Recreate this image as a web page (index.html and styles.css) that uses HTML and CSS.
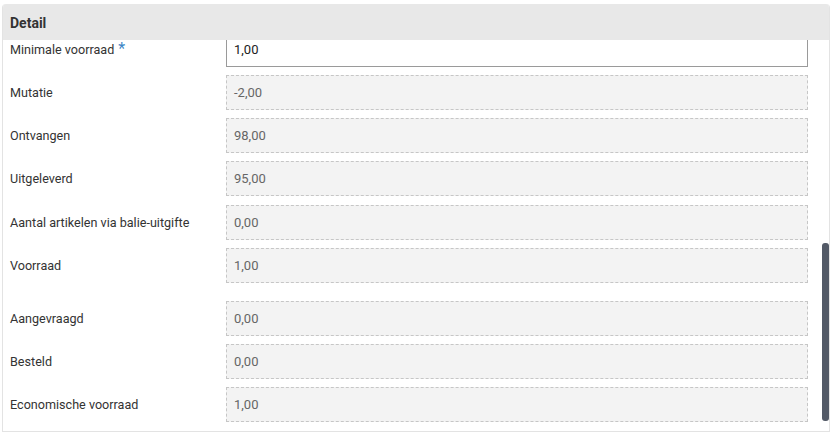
FILE: index.html
```html
<!DOCTYPE html>
<html>
<head>
<meta charset="utf-8">
<link rel="stylesheet" href="styles.css">
</head>
<body>
<div class="panel">
  <div class="panel-header">Detail</div>
  <div class="panel-body">
    <div class="scroll-area">
      <div class="form">
        <div class="row"><label class="label">Minimale voorraad<span class="req">*</span></label><div class="input editable">1,00</div></div>
        <div class="row"><label class="label">Mutatie</label><div class="input disabled">-2,00</div></div>
        <div class="row"><label class="label">Ontvangen</label><div class="input disabled">98,00</div></div>
        <div class="row row-nudge"><label class="label">Uitgeleverd</label><div class="input disabled">95,00</div></div>
        <div class="row"><label class="label">Aantal artikelen via balie-uitgifte</label><div class="input disabled">0,00</div></div>
        <div class="row row-spaced"><label class="label">Voorraad</label><div class="input disabled">1,00</div></div>
        <div class="row"><label class="label">Aangevraagd</label><div class="input disabled">0,00</div></div>
        <div class="row"><label class="label">Besteld</label><div class="input disabled">0,00</div></div>
        <div class="row"><label class="label">Economische voorraad</label><div class="input disabled">1,00</div></div>
      </div>
    </div>
    <div class="scroll-track"><div class="scroll-thumb"></div></div>
  </div>
</div>
</body>
</html>
```
FILE: styles.css
```css
* { box-sizing: border-box; }
html, body {
  margin: 0;
  padding: 0;
  background: #ffffff;
  font-family: Roboto, "Liberation Sans", sans-serif;
  color: #333333;
}
.panel {
  margin: 4px 5px 0 2px;
  height: 428px;
  border: 1px solid #e3e3e3;
  border-top: none;
  border-radius: 4px 4px 0 0;
  display: flex;
  flex-direction: column;
  overflow: hidden;
}
.panel-header {
  height: 36px;
  flex: none;
  background: #e8e8e8;
  padding-left: 7px;
  padding-top: 1px;
  display: flex;
  align-items: center;
  font-size: 14px;
  font-weight: 700;
  color: #333333;
}
.panel-body {
  flex: 1;
  display: flex;
  min-height: 0;
}
.scroll-area {
  flex: 1;
  overflow: hidden;
  padding-right: 13px;
}
.form {
  margin-top: -8px;
  padding-left: 7px;
  display: flex;
  flex-direction: column;
  gap: 8px;
}
.row {
  display: grid;
  grid-template-columns: 216px 1fr;
  align-items: center;
  height: 35px;
}
.row-nudge { margin-bottom: 1px; }
.row-spaced { margin-bottom: 10px; }
.label {
  font-size: 12.6px;
  color: #333333;
  white-space: nowrap;
  line-height: 18px;
}
.req {
  color: #3d86c6;
  font-size: 16px;
  line-height: 16px;
  margin-left: 4px;
  position: relative;
  top: 0px;
}
.input {
  height: 35px;
  display: flex;
  align-items: center;
  padding-left: 7px;
  font-size: 13px;
}
.editable {
  background: #ffffff;
  border: 1px solid #9a9a9a;
  border-top-color: #b5b5b5;
  color: #222222;
}
.disabled {
  background: #f3f3f3;
  border: 1px dashed #c6c6c6;
  color: #666666;
}
.scroll-track {
  width: 8px;
  flex: none;
  padding-left: 1px;
}
.scroll-thumb {
  margin-top: 203px;
  height: 178px;
  width: 7px;
  background: #535a67;
  border-radius: 3px;
}
```
